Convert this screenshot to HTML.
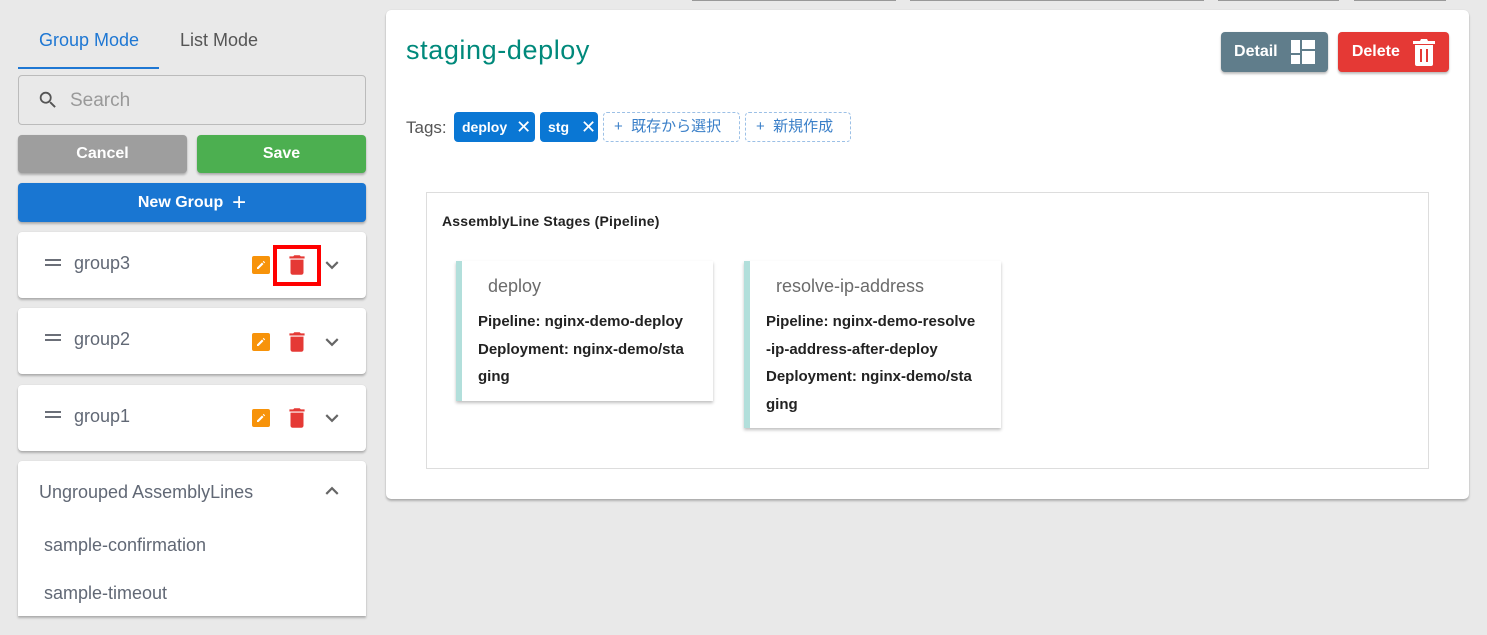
<!DOCTYPE html>
<html><head><meta charset="utf-8"><style>
*{box-sizing:border-box;margin:0;padding:0}
body{width:1487px;height:635px;background:#e9e9e9;font-family:"Liberation Sans","Noto Sans CJK JP",sans-serif;position:relative;overflow:hidden}
.a{position:absolute}
.sh{box-shadow:0 2px 2px rgba(0,0,0,.25),0 0 1px rgba(0,0,0,.12)}
.btn{border-radius:4px;color:#fff;font-weight:bold;font-size:16px;display:flex;align-items:center;justify-content:center}
.grp{left:18px;width:348px;height:66px;background:#fff;border-radius:4px}
.grp .t{position:absolute;left:56px;top:0;line-height:62px;font-size:18px;color:#616875}
.card{background:#fff;border-left:6px solid #b2dfdb;box-shadow:0 2px 3px rgba(0,0,0,.25)}
.card .h{font-size:18px;color:#6b6b6b;margin:15px 0 0 26px}
.card .l{font-size:15px;font-weight:bold;color:#222;line-height:27.5px;margin-left:16px}
</style></head><body>
<div class="a" style="left:692px;top:-2px;width:204px;height:3px;background:#999"></div>
<div class="a" style="left:910px;top:-2px;width:294px;height:3px;background:#999"></div>
<div class="a" style="left:1218px;top:-2px;width:121px;height:3px;background:#999"></div>
<div class="a" style="left:1354px;top:-2px;width:92px;height:3px;background:#999"></div>

<div class="a" style="left:39px;top:30px;font-size:18px;color:#1e77d3">Group Mode</div>
<div class="a" style="left:180px;top:30px;font-size:18px;color:#555">List Mode</div>
<div class="a" style="left:18px;top:67px;width:141px;height:2px;background:#1e77d3"></div>
<div class="a" style="left:18px;top:75px;width:348px;height:50px;border:1px solid #bbb;border-radius:4px"></div>
<svg class="a" style="left:37px;top:89px" width="22" height="22" viewBox="0 0 24 24"><path fill="#555" d="M15.5 14h-.79l-.28-.27A6.470 6.470 0 0 0 16 9.5 6.5 6.5 0 1 0 9.5 16c1.61 0 3.090-.59 4.230-1.57l.27.28v.79l5 4.99L20.49 19l-4.99-5zm-6 0C7.01 14 5 11.99 5 9.5S7.01 5 9.5 5 14 7.01 14 9.5 11.99 14 9.5 14z"/></svg>
<div class="a" style="left:70px;top:90px;font-size:19px;color:#999">Search</div>
<div class="a btn sh" style="left:18px;top:135px;width:169px;height:38px;background:#9e9e9e">Cancel</div>
<div class="a btn sh" style="left:197px;top:135px;width:169px;height:38px;background:#4caf50">Save</div>
<div class="a btn sh" style="left:18px;top:183px;width:348px;height:39px;background:#1976d2">New Group&nbsp;&nbsp;<span style="font-size:24px;font-weight:normal;line-height:1">+</span></div>

<div class="a grp sh" style="top:232px"><div class="t">group3</div></div>
<div class="a grp sh" style="top:308px"><div class="t">group2</div></div>
<div class="a grp sh" style="top:385px"><div class="t">group1</div></div>
<div class="a" style="left:45px;top:259px;width:16px;height:2px;background:#6b6f78"></div><div class="a" style="left:45px;top:264px;width:16px;height:2px;background:#6b6f78"></div>
<div class="a" style="left:45px;top:334px;width:16px;height:2px;background:#6b6f78"></div><div class="a" style="left:45px;top:339px;width:16px;height:2px;background:#6b6f78"></div>
<div class="a" style="left:45px;top:411px;width:16px;height:2px;background:#6b6f78"></div><div class="a" style="left:45px;top:416px;width:16px;height:2px;background:#6b6f78"></div>

<div class="a" style="left:273px;top:245px;width:48px;height:41px;border:4px solid #f00"></div>

<svg width="0" height="0" style="position:absolute"><defs>
<symbol id="pen" viewBox="0 0 18 18"><rect width="18" height="18" rx="2" fill="#f7930a"/><path fill="#fff" d="M5 11.5V13h1.5l5-5L10 6.5zM12.3 7.2l-1.5-1.5.8-.8 1.5 1.5z"/></symbol>
<symbol id="tr" viewBox="0 0 24 24"><path fill="#e53935" d="M6 19c0 1.1.9 2 2 2h8c1.1 0 2-.9 2-2V7H6v12zM19 4h-3.5l-1-1h-5l-1 1H5v2h14V4z"/></symbol>
<symbol id="ch" viewBox="0 0 24 24"><path fill="#666" d="M7.41 8.59 12 13.17l4.59-4.58L18 10l-6 6-6-6z"/></symbol>
</defs></svg>
<svg class="a" style="left:252px;top:256px" width="18" height="18"><use href="#pen"/></svg>
<svg class="a" style="left:284px;top:252px" width="26" height="26"><use href="#tr"/></svg>
<svg class="a" style="left:319px;top:252px" width="26" height="26"><use href="#ch"/></svg>
<svg class="a" style="left:252px;top:333px" width="18" height="18"><use href="#pen"/></svg>
<svg class="a" style="left:284px;top:329px" width="26" height="26"><use href="#tr"/></svg>
<svg class="a" style="left:319px;top:329px" width="26" height="26"><use href="#ch"/></svg>
<svg class="a" style="left:252px;top:409px" width="18" height="18"><use href="#pen"/></svg>
<svg class="a" style="left:284px;top:405px" width="26" height="26"><use href="#tr"/></svg>
<svg class="a" style="left:319px;top:405px" width="26" height="26"><use href="#ch"/></svg>

<div class="a sh" style="left:18px;top:461px;width:348px;height:155px;background:#fff;border-radius:4px 4px 0 0"></div>
<div class="a" style="left:39px;top:482px;font-size:18px;color:#616875">Ungrouped AssemblyLines</div>
<svg class="a" style="left:319px;top:478px;transform:rotate(180deg)" width="26" height="26"><use href="#ch"/></svg>
<div class="a" style="left:44px;top:535px;font-size:18px;color:#616875">sample-confirmation</div>
<div class="a" style="left:44px;top:583px;font-size:18px;color:#616875">sample-timeout</div>

<div class="a sh" style="left:386px;top:10px;width:1083px;height:489px;background:#fff;border-radius:5px"></div>
<div class="a" style="left:406px;top:35px;font-size:27px;letter-spacing:0.6px;color:#00897b">staging-deploy</div>
<div class="a btn sh" style="left:1221px;top:32px;width:107px;height:40px;background:#607d8b">Detail&nbsp;&nbsp;&nbsp;<svg width="24" height="24" viewBox="0 0 24 24"><path fill="#fff" d="M0 0h9v13H0zM11 0h13v9H11zM11 11h13v13H11zM0 15h9v9H0z"/></svg></div>
<div class="a btn sh" style="left:1338px;top:32px;width:111px;height:40px;background:#e53935">Delete&nbsp;&nbsp;&nbsp;<svg width="22" height="28" viewBox="0 0 22 28"><path fill="#fff" d="M2 7h18v19a2 2 0 0 1-2 2H4a2 2 0 0 1-2-2zM0 3h7l1-2h6l1 2h7v3H0z"/><path fill="#e53935" d="M7 11h2v13H7zM13 11h2v13h-2z"/></svg></div>

<div class="a" style="left:406px;top:118px;font-size:17px;color:#555">Tags:</div>
<div class="a btn" style="left:454px;top:112px;width:81px;height:30px;background:#0a77d4;font-size:14px;justify-content:flex-start;padding-left:8px">deploy <span style="font-size:18px;font-weight:normal;margin-left:9px">✕</span></div>
<div class="a btn" style="left:540px;top:112px;width:58px;height:30px;background:#0a77d4;font-size:14px;justify-content:flex-start;padding-left:8px">stg <span style="font-size:18px;font-weight:normal;margin-left:12px">✕</span></div>
<div class="a" style="left:603px;top:112px;width:137px;height:30px;border:1px dashed #9cc0e6;border-radius:4px;color:#3a7fc8;font-size:15px;line-height:28px;padding-left:10px">+&nbsp;&nbsp;既存から選択</div>
<div class="a" style="left:745px;top:112px;width:106px;height:30px;border:1px dashed #9cc0e6;border-radius:4px;color:#3a7fc8;font-size:15px;line-height:28px;padding-left:10px">+&nbsp;&nbsp;新規作成</div>

<div class="a" style="left:426px;top:192px;width:1003px;height:277px;border:1px solid #ddd"></div>
<div class="a" style="left:442px;top:213px;font-size:14px;font-weight:bold;color:#222;letter-spacing:0.2px">AssemblyLine Stages (Pipeline)</div>
<div class="a card" style="left:456px;top:261px;width:257px;height:140px"><div class="h">deploy</div><div class="l" style="margin-top:11px">Pipeline: nginx-demo-deploy<br>Deployment: nginx-demo/sta<br>ging</div></div>
<div class="a card" style="left:744px;top:261px;width:257px;height:167px"><div class="h">resolve-ip-address</div><div class="l" style="margin-top:11px">Pipeline: nginx-demo-resolve<br>-ip-address-after-deploy<br>Deployment: nginx-demo/sta<br>ging</div></div>
</body></html>
